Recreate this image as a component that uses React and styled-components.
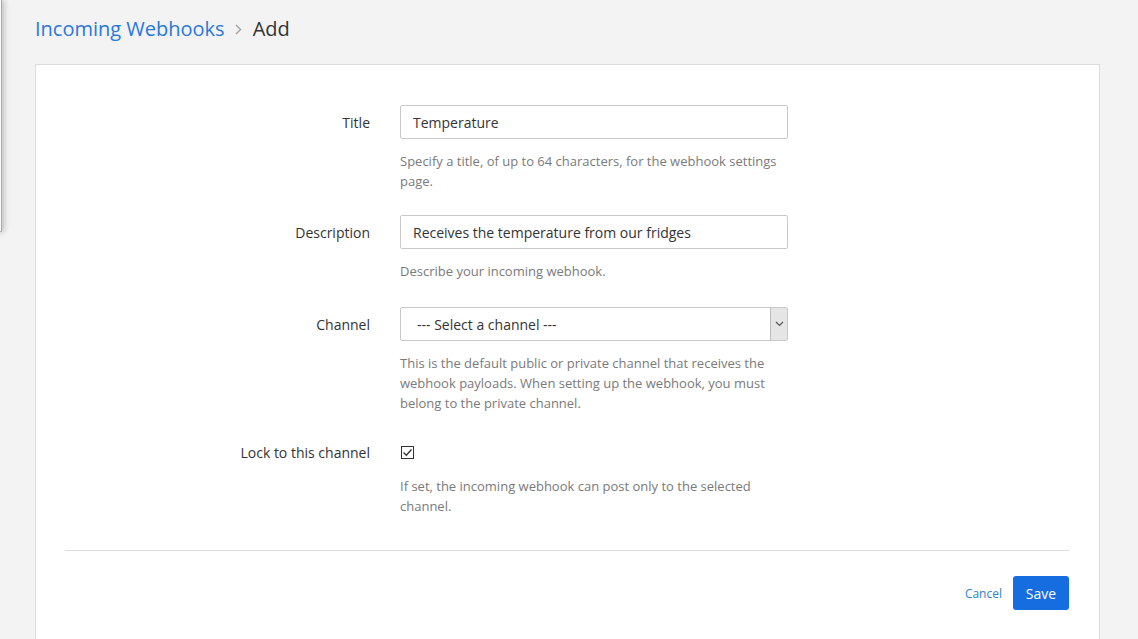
import { useState } from "react";
import styled, { createGlobalStyle } from "styled-components";

const GlobalStyle = createGlobalStyle`
  html, body {
    margin: 0;
    padding: 0;
    background: #f3f3f3;
    font-family: "Open Sans", "Noto Sans", sans-serif;
    color: #333;
    overflow: hidden;
  }
  * { box-sizing: border-box; }
`;

const Page = styled.div`
  position: relative;
  width: 1138px;
  height: 639px;
  padding: 15px 38px 0 35px;
  overflow: hidden;
`;

/* edge of a panel sliding in from the left, lies over the page */
const SidePanelEdge = styled.div`
  position: absolute;
  left: -60px;
  top: 0;
  width: 62px;
  height: 232px;
  background: #fafafa;
  border-right: 1px solid #a9a9a9;
  border-bottom: 1px solid #b5b5b5;
  box-shadow: 2px 0 6px rgba(0, 0, 0, 0.22);
`;

const Breadcrumb = styled.h2`
  display: flex;
  align-items: center;
  margin: 0 0 21px;
  font-size: 20px;
  font-weight: 400;
  line-height: 28px;
`;

const Crumb = styled.a`
  color: #2a78dc;
  text-decoration: none;
`;

const Separator = styled.span`
  display: flex;
  align-items: center;
  margin: 1px 11px 0 10px;
`;

const Current = styled.span`
  color: #333;
`;

const Card = styled.div`
  background: #fff;
  border: 1px solid #dcdcdc;
  border-bottom: none;
  height: 600px;
  padding: 40px 30px 0 29px;
`;

const FormGroup = styled.div`
  display: grid;
  grid-template-columns: 305px 388px;
  column-gap: 30px;
  margin-bottom: ${(p) => p.$mb ?? 25}px;
`;

const Label = styled.label`
  font-size: 14px;
  text-align: right;
  height: ${(p) => p.$h || 34}px;
  line-height: ${(p) => (p.$h || 34) + 2}px;
  color: #333;
`;

const Field = styled.div`
  display: flex;
  flex-direction: column;
`;

const Input = styled.input`
  width: 388px;
  height: 34px;
  border: 1px solid #c9c9c9;
  border-radius: 2px;
  padding: 0 12px;
  font-family: inherit;
  font-size: 14px;
  color: #333;
  outline: none;
`;

const SelectBox = styled.div`
  display: flex;
  width: 388px;
  height: 34px;
  border: 1px solid #c9c9c9;
  border-radius: 2px;
  background: #fff;
`;

const NativeSelect = styled.select`
  flex: 1;
  border: none;
  appearance: none;
  background: transparent;
  padding: 0 16px;
  font-family: inherit;
  font-size: 14px;
  color: #333;
  outline: none;
`;

const ArrowBox = styled.span`
  width: 17px;
  margin: 0 0 0 auto;
  display: flex;
  align-items: center;
  justify-content: center;
  background: #e5e5e5;
  border-left: 1px solid #bdbdbd;
`;

const CheckRow = styled.div`
  height: 30px;
  display: flex;
  align-items: center;
`;

const CheckBox = styled.span`
  width: 13px;
  height: 13px;
  margin-left: 1px;
  border: 1px solid #333;
  background: #fff;
  display: flex;
  align-items: center;
  justify-content: center;
  cursor: pointer;
`;

const Help = styled.p`
  margin: ${(p) => p.$mt || 12}px 0 0;
  font-size: 13px;
  line-height: 20px;
  color: #7a7a7a;
`;

const Divider = styled.hr`
  border: none;
  border-top: 1px solid #dcdcdc;
  margin: 34px 0 25px;
`;

const Footer = styled.div`
  display: flex;
  justify-content: flex-end;
  align-items: center;
  gap: 11px;
`;

const CancelLink = styled.a`
  font-size: 12px;
  color: #2f7fc9;
  text-decoration: none;
  cursor: pointer;
`;

const SaveButton = styled.button`
  width: 56px;
  height: 34px;
  border: none;
  border-radius: 3px;
  background: #166de0;
  color: #fff;
  font-family: inherit;
  font-size: 14px;
  cursor: pointer;
`;

export default function App() {
  const [locked, setLocked] = useState(true);

  return (
    <Page>
      <GlobalStyle />
      <SidePanelEdge />
      <Breadcrumb>
        <Crumb href="#">Incoming Webhooks</Crumb>
        <Separator>
          <svg width="7" height="11" viewBox="0 0 7 11">
            <path d="M1 1l4.5 4.5L1 10" fill="none" stroke="#a0a0a0" strokeWidth="1.4" />
          </svg>
        </Separator>
        <Current>Add</Current>
      </Breadcrumb>
      <Card>
        <FormGroup $mb={24}>
          <Label>Title</Label>
          <Field>
            <Input defaultValue="Temperature" />
            <Help>Specify a title, of up to 64 characters, for the webhook settings page.</Help>
          </Field>
        </FormGroup>

        <FormGroup $mb={26}>
          <Label>Description</Label>
          <Field>
            <Input defaultValue="Receives the temperature from our fridges" />
            <Help>Describe your incoming webhook.</Help>
          </Field>
        </FormGroup>

        <FormGroup $mb={24}>
          <Label>Channel</Label>
          <Field>
            <SelectBox>
              <NativeSelect defaultValue="">
                <option value="">--- Select a channel ---</option>
              </NativeSelect>
              <ArrowBox>
                <svg width="9" height="6" viewBox="0 0 9 6">
                  <path d="M1 1l3.5 3.5L8 1" fill="none" stroke="#555" strokeWidth="1.2" />
                </svg>
              </ArrowBox>
            </SelectBox>
            <Help>
              This is the default public or private channel that receives the webhook payloads.
              When setting up the webhook, you must belong to the private channel.
            </Help>
          </Field>
        </FormGroup>

        <FormGroup $mb={0}>
          <Label $h={30}>Lock to this channel</Label>
          <Field>
            <CheckRow>
              <CheckBox onClick={() => setLocked(!locked)}>
                {locked && (
                  <svg width="11" height="11" viewBox="0 0 11 11">
                    <path d="M1.5 5.5l2.8 2.8L9.5 2.5" fill="none" stroke="#333" strokeWidth="1.3" />
                  </svg>
                )}
              </CheckBox>
            </CheckRow>
            <Help $mt={9}>If set, the incoming webhook can post only to the selected channel.</Help>
          </Field>
        </FormGroup>

        <Divider />
        <Footer>
          <CancelLink>Cancel</CancelLink>
          <SaveButton>Save</SaveButton>
        </Footer>
      </Card>
    </Page>
  );
}
